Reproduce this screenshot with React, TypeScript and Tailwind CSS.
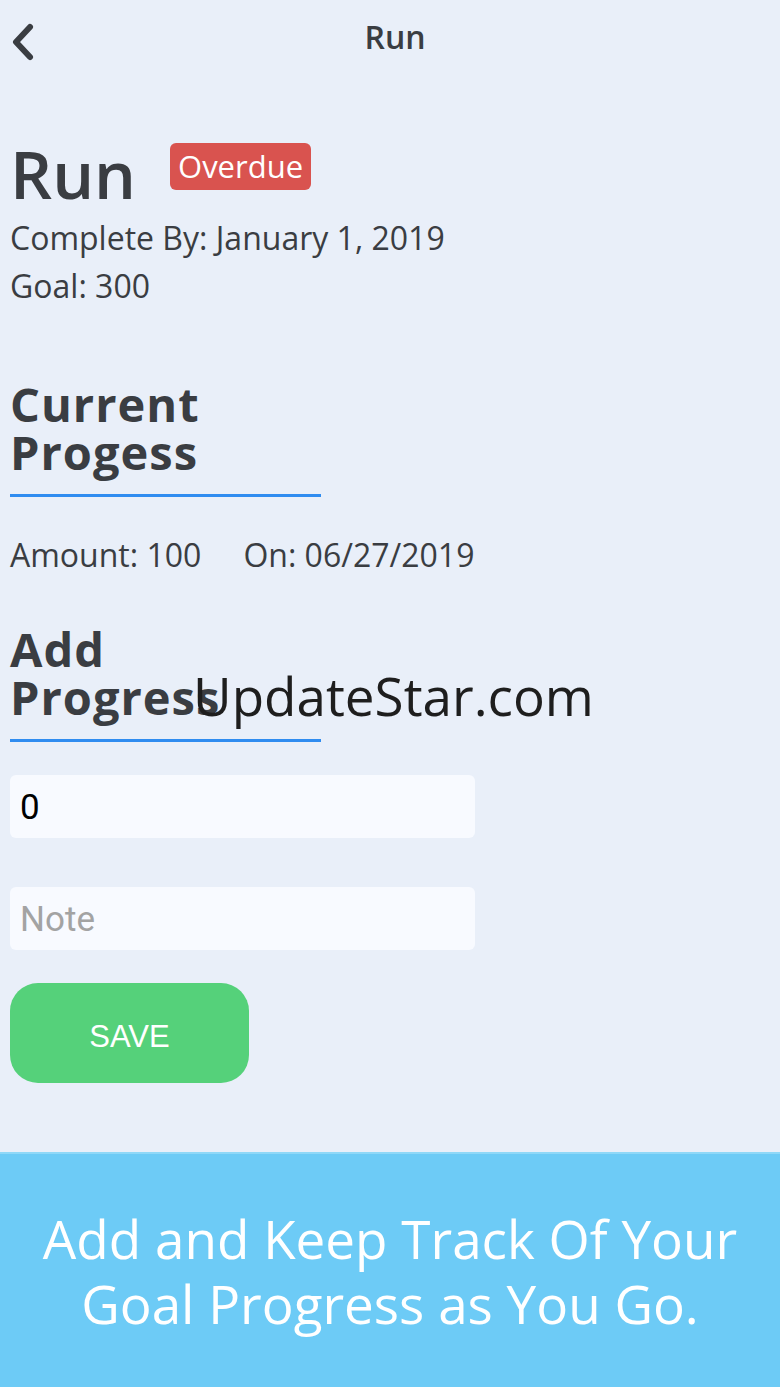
import React from "react";

export default function App() {
  return (
    <div
      className="w-[780px] h-[1387px] bg-[#e9eff9] flex flex-col overflow-hidden relative"
      style={{ fontFamily: '"Open Sans", "Noto Sans", sans-serif' }}
    >
      {/* Header */}
      <div className="h-[80px] relative flex items-center justify-center">
        <svg
          className="absolute left-[8px] top-[22px]"
          width="30"
          height="40"
          viewBox="0 0 30 40"
          fill="none"
        >
          <path
            d="M22 5 L8 20 L22 35"
            stroke="#3a3d42"
            strokeWidth="6"
            strokeLinecap="round"
            strokeLinejoin="round"
          />
        </svg>
        <span className="text-[32px] font-semibold text-[#3a3d42] ml-[10px] -mt-[6px]">Run</span>
      </div>

      {/* Content */}
      <div className="px-[10px] flex flex-col text-[#3a3d42]">
        <div className="flex items-center mt-[50px]">
          <span className="text-[66px] font-semibold leading-[86px]">Run</span>
          <span className="ml-[34px] -mt-[14px] bg-[#d9534f] text-white text-[31px] leading-[47px] px-[8px] rounded-[6px]">
            Overdue
          </span>
        </div>
        <div className="text-[32px] leading-[48px] -mt-[2px]">Complete By: January 1, 2019</div>
        <div className="text-[32px] leading-[48px]">Goal: 300</div>

        <div className="mt-[70px] w-[311px] text-[47px] font-bold leading-[48px] tracking-[1px] pb-[18px] border-b-[3px] border-[#2f8cf0]">
          Current
          <br />
          Progess
        </div>

        <div className="text-[32px] leading-[40px] mt-[38px] flex gap-[42px]">
          <span>Amount: 100</span>
          <span>On: 06/27/2019</span>
        </div>

        <div className="mt-[50px] w-[311px] text-[47px] font-bold leading-[48px] tracking-[1px] pb-[18px] border-b-[3px] border-[#2f8cf0]">
          Add
          <br />
          Progress
        </div>

        <div
          className="mt-[33px] w-[465px] h-[63px] bg-[#f8faff] rounded-[6px] flex items-center px-[10px] pt-[4px] text-[35px] text-black"
          style={{ fontFamily: 'Roboto, "Liberation Sans", sans-serif' }}
        >
          0
        </div>
        <div
          className="mt-[49px] w-[465px] h-[63px] bg-[#f8faff] rounded-[6px] flex items-center px-[10px] pt-[4px] text-[35px] text-[#a3a3a3]"
          style={{ fontFamily: 'Roboto, "Liberation Sans", sans-serif' }}
        >
          Note
        </div>
        <div
          className="mt-[33px] w-[239px] h-[100px] bg-[#55d17a] rounded-[28px] flex items-center justify-center pt-[8px] text-white text-[31px]"
          style={{ fontFamily: '"Liberation Sans", Arial, sans-serif' }}
        >
          SAVE
        </div>
      </div>

      {/* Watermark */}
      <div
        className="absolute left-[193px] top-[661px] text-[53px] leading-[70px] text-[#1e1e1e]"
        style={{ fontFamily: '"Open Sans", "Noto Sans", sans-serif' }}
      >
        UpdateStar.com
      </div>

      {/* Banner */}
      <div className="mt-auto h-[235px] bg-[#6dcbf6] border-t-[2px] border-[#8fd8f8] flex items-center justify-center">
        <div className="text-white text-[53px] leading-[65px] text-center">
          Add and Keep Track Of Your
          <br />
          Goal Progress as You Go.
        </div>
      </div>
    </div>
  );
}
